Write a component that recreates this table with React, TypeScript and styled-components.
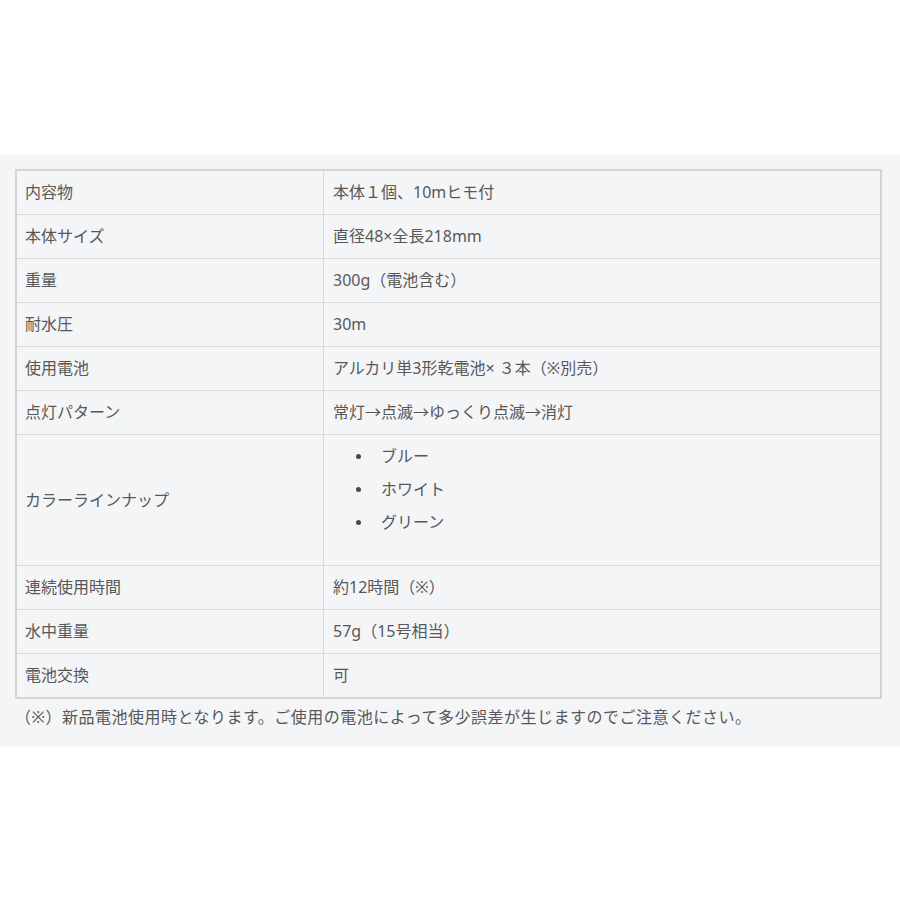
import React from "react";
import styled, { createGlobalStyle } from "styled-components";

const Global = createGlobalStyle`
  html, body { margin: 0; padding: 0; background: #ffffff; }
  body { font-family: "Noto Sans", "Noto Sans CJK JP", sans-serif; }
`;

const Panel = styled.section`
  margin-top: 155px;
  background: #f4f5f7;
  padding: 14px 18px 18px 15px;
  color: #585858;
`;

const Table = styled.table`
  width: 100%;
  border-collapse: collapse;
  border: 2px solid #d3d4d6;
  font-size: 16px;
`;

const Row = styled.tr`
  border-bottom: 1px solid #d9dadc;
`;

const Head = styled.td`
  width: 288px;
  padding: 10px 10px 10px 8px;
  line-height: 23px;
  border-right: 1px solid #d9dadc;
  vertical-align: middle;
  text-align: left;
`;

const Cell = styled.td<{ $list?: boolean }>`
  padding: ${(p) => (p.$list ? "5px 10px 10px 9px" : "10px 10px 10px 9px")};
  line-height: 23px;
  vertical-align: middle;
`;

const List = styled.ul`
  margin: 0 0 16px;
  padding-left: 22px;
  list-style: none;
`;

const Item = styled.li`
  line-height: 33px;
  &::before {
    content: "";
    display: inline-block;
    width: 5px;
    height: 5px;
    border-radius: 50%;
    background: #4a4a4a;
    vertical-align: middle;
    margin: 0 20px 2px 1px;
  }
`;

const Note = styled.p`
  margin: 6px 0 0 0;
  font-size: 16px;
  line-height: 24px;
  letter-spacing: 0.5px;
`;

const rows: [string, string][] = [
  ["内容物", "本体１個、10mヒモ付"],
  ["本体サイズ", "直径48×全長218mm"],
  ["重量", "300g（電池含む）"],
  ["耐水圧", "30m"],
  ["使用電池", "アルカリ単3形乾電池× ３本（※別売）"],
  ["点灯パターン", "常灯→点滅→ゆっくり点滅→消灯"],
];

const rows2: [string, string][] = [
  ["連続使用時間", "約12時間（※）"],
  ["水中重量", "57g（15号相当）"],
  ["電池交換", "可"],
];

export default function App() {
  return (
    <>
      <Global />
      <Panel>
        <Table>
          <tbody>
            {rows.map(([k, v]) => (
              <Row key={k}>
                <Head>{k}</Head>
                <Cell>{v}</Cell>
              </Row>
            ))}
            <Row>
              <Head>カラーラインナップ</Head>
              <Cell $list>
                <List>
                  <Item>ブルー</Item>
                  <Item>ホワイト</Item>
                  <Item>グリーン</Item>
                </List>
              </Cell>
            </Row>
            {rows2.map(([k, v]) => (
              <Row key={k}>
                <Head>{k}</Head>
                <Cell>{v}</Cell>
              </Row>
            ))}
          </tbody>
        </Table>
        <Note>（※）新品電池使用時となります。ご使用の電池によって多少誤差が生じますのでご注意ください。</Note>
      </Panel>
    </>
  );
}
